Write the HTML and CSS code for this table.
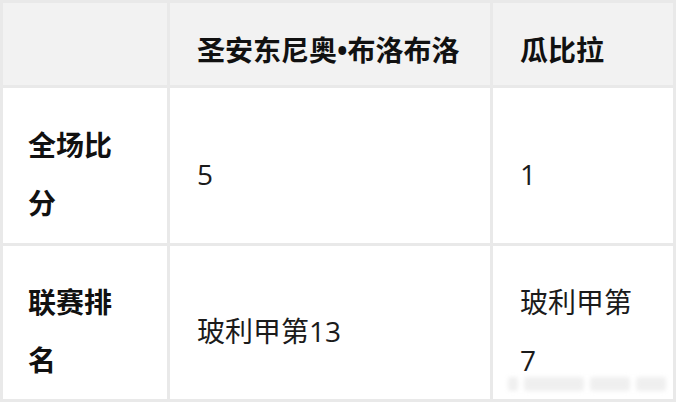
FILE: index.html
```html
<!DOCTYPE html>
<html lang="zh-CN">
<head>
<meta charset="utf-8">
<title>比赛数据</title>
<link rel="stylesheet" href="styles.css">
</head>
<body>
<div class="wrap">
  <table class="stats">
    <colgroup>
      <col class="c1">
      <col class="c2">
      <col class="c3">
    </colgroup>
    <thead>
      <tr>
        <th class="label"></th>
        <th class="nowrap">圣安东尼奥•布洛布洛</th>
        <th>瓜比拉</th>
      </tr>
    </thead>
    <tbody>
      <tr class="r1">
        <th class="label">全场比分</th>
        <td>5</td>
        <td>1</td>
      </tr>
      <tr class="r2">
        <th class="label">联赛排名</th>
        <td>玻利甲第13</td>
        <td>玻利甲第7</td>
      </tr>
    </tbody>
  </table>
  <div class="watermark" aria-hidden="true">
    <span class="wm-a"></span><span class="wm-b"></span><span class="wm-c"></span><span class="wm-d"></span>
  </div>
</div>
</body>
</html>
```
FILE: styles.css
```css
html, body {
  margin: 0;
  padding: 0;
  background: #ffffff;
}

.wrap {
  position: relative;
  width: 676px;
  height: 402px;
  overflow: hidden;
}

.stats {
  border-collapse: separate;
  border-spacing: 3px;
  background: #e9e9e9;
  width: 676px;
  table-layout: fixed;
  margin: 0;
  font-family: "Open Sans", "Noto Sans CJK SC", sans-serif;
  font-size: 28px;
  line-height: 58px;
  color: #1b1b1b;
}

.c1 { width: 164px; }
.c2 { width: 320px; }
.c3 { width: 180px; }

.stats th,
.stats td {
  text-align: left;
  vertical-align: middle;
  padding: 0 36px 0 27px;
  word-break: break-all;
}

.stats .nowrap {
  white-space: nowrap;
}

.stats th {
  font-weight: 700;
  color: #111111;
}

.stats td {
  font-weight: 400;
  background: #ffffff;
}

.stats thead th {
  background: #f2f2f2;
  padding-top: 18px;
  padding-bottom: 6px;
}

.stats tbody th {
  background: #ffffff;
}

.stats .label {
  padding-left: 25px;
  padding-right: 40px;
}

.r1 th, .r1 td {
  padding-top: 28px;
  padding-bottom: 11px;
}

.r2 th, .r2 td {
  padding-top: 27px;
  padding-bottom: 10px;
}

.watermark {
  position: absolute;
  right: 10px;
  bottom: 11px;
  display: flex;
  gap: 6px;
  align-items: center;
  filter: blur(2px);
  opacity: 0.4;
}

.watermark span {
  display: block;
  height: 14px;
  background: #d8d8d8;
  border-radius: 3px;
}

.wm-a { width: 10px; }
.wm-b { width: 60px; }
.wm-c { width: 40px; }
.wm-d { width: 30px; }
```
